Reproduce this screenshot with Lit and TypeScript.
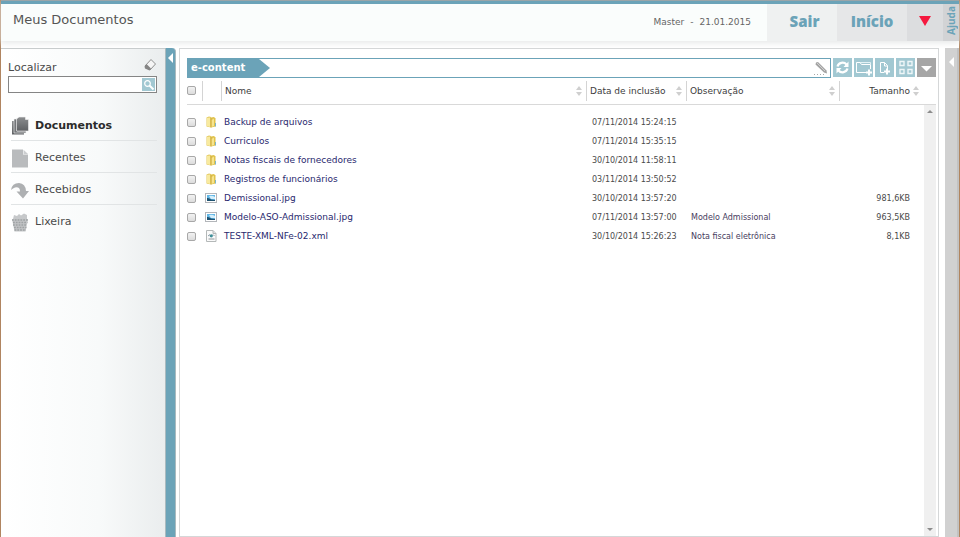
import { LitElement, html, css, svg, nothing } from "lit";
import { customElement } from "lit/decorators.js";
import { classMap } from "lit/directives/class-map.js";

type Kind = "folder" | "image" | "xml";
interface Entry { name: string; kind: Kind; date: string; note?: string; size?: string; }

const ENTRIES: Entry[] = [
  { name: "Backup de arquivos", kind: "folder", date: "07/11/2014 15:24:15" },
  { name: "Curriculos", kind: "folder", date: "07/11/2014 15:35:15" },
  { name: "Notas fiscais de fornecedores", kind: "folder", date: "30/10/2014 11:58:11" },
  { name: "Registros de funcionários", kind: "folder", date: "03/11/2014 13:50:52" },
  { name: "Demissional.jpg", kind: "image", date: "30/10/2014 13:57:20", size: "981,6KB" },
  { name: "Modelo-ASO-Admissional.jpg", kind: "image", date: "07/11/2014 13:57:00", note: "Modelo Admissional", size: "963,5KB" },
  { name: "TESTE-XML-NFe-02.xml", kind: "xml", date: "30/10/2014 15:26:23", note: "Nota fiscal eletrônica", size: "8,1KB" },
];

const icon = (w: number, h: number, body: unknown) =>
  html`<svg width=${w} height=${h} viewBox="0 0 ${w} ${h}" aria-hidden="true">${body}</svg>`;

const fileIcons: Record<Kind, unknown> = {
  folder: icon(12, 12, svg`
    <path d="M1.500 1.500 L4 0.500 L6 1 V11.500 L1.500 10.500Z" fill="#e3c95f"/>
    <path d="M2 2 L5 1.500 V11 L2 10Z" fill="#f8ea9f"/>
    <path d="M6 1.500 L9 1 L10.500 2.500 V10.500 L6 11.500Z" fill="#e0c24c"/>
    <path d="M6.500 4 L9 2.500 V10 L6.500 11Z" fill="#f6e48d"/>
    <path d="M6 2 V11.500" stroke="#cbaa45" stroke-width="0.800"/>
    <path d="M10 7 H11 V10.500 H10Z" fill="#7db5cb"/>`),
  image: icon(12, 12, svg`
    <rect x="0.500" y="1.500" width="11" height="9" fill="#fff" stroke="#b3b6ba"/>
    <rect x="2" y="3" width="8" height="6" fill="#62b7e6"/>
    <path d="M4 4 Q7 3 10 5 V7 H6Z" fill="#d5effb"/>
    <path d="M2 6 Q4 5.500 6 7.500 L10 8 V9 H2Z" fill="#1f5270"/>`),
  xml: icon(12, 12, svg`
    <path d="M1.500 0.500 H8 L11 3.500 V11.500 H1.500Z" fill="#fafafa" stroke="#b4b8b8"/>
    <path d="M8 0.500 V3.500 H11" fill="#dfe2e2" stroke="#b4b8b8"/>
    <path d="M3 6 L5 4.500 M9.500 6 L8 4.500" stroke="#8c9ba6"/>
    <circle cx="6.300" cy="5.800" r="1.600" fill="#3f8f98"/>
    <path d="M3.500 9 H9.500" stroke="#8f979c"/>`),
};

const navItems = [
  { label: "Documentos", active: true, pic: icon(18, 19, svg`
    <defs><linearGradient id="dk" x1="0" y1="0" x2="0" y2="1">
      <stop offset="0" stop-color="#8b8d8f"/><stop offset="1" stop-color="#5f6164"/></linearGradient></defs>
    <path d="M1 5 H4 V16.500 H13 V18.500 H1Z" fill="url(#dk)"/>
    <path d="M3 3 H6 V15 H15 V17 H3Z" fill="#737578" stroke="#f4f4f4" stroke-width="0.600"/>
    <path d="M5.500 3 L8 1 H14.500 V3.500 H17.500 V15 H5.500Z" fill="url(#dk)" stroke="#f4f4f4" stroke-width="0.600"/>`) },
  { label: "Recentes", pic: icon(18, 19, svg`
    <path d="M1 0.500 H12 V5.500 H17 V18.500 H1Z" fill="#b9bbbd"/><path d="M12.500 0.800 L17 5 H12.500Z" fill="#cbcdcf"/>`) },
  { label: "Recebidos", pic: icon(18, 19, svg`
    <path d="M0 9 Q1 2 8 2 Q14.500 2.500 15 10 H18 L12 17.500 L5.500 10.500 H9 Q9 5.500 4 6.500 Q2 7 0 9Z" fill="#aeb0b2"/>`) },
  { label: "Lixeira", pic: icon(18, 19, svg`
    <path d="M2 6 L3 2 L6 3 L8 1 L10 2.500 L13 0.500 L16 2 V6Z" fill="#c6c8ca"/>
    <path d="M1 6 H17 L14.500 18.500 H3.500Z" fill="#c3c5c7"/>
    <path d="M1 7 H17 M2 9.500 H16.500 M2 12 H16 M3 14.500 H15.500 M3.500 17 H15" stroke="#9fa2a4" stroke-width="1.500" stroke-dasharray="1.800 1"/>`) },
];

const columns = [
  { cls: "name", label: "Nome" },
  { cls: "date", label: "Data de inclusão" },
  { cls: "note", label: "Observação" },
  { cls: "size", label: "Tamanho" },
];

const tools = [
  { label: "Atualizar", pic: icon(19, 19, svg`
    <path d="M4.500 8.500 A5.200 5 0 0 1 13.500 6.500 M14.500 10.500 A5.200 5 0 0 1 5.500 12.500" fill="none" stroke="#fff" stroke-width="2.200"/>
    <path d="M15.500 3.500 V9 H10.500Z M3.500 15.500 V10 H8.500Z" fill="#fff"/>`) },
  { label: "Nova pasta", pic: icon(19, 19, svg`
    <path d="M12 14.500 H2.500 V4.500 H6 L7.500 6.500 H16.500 V11" fill="none" stroke="#fff"/>
    <path d="M6 4.500 H16.500 V7" fill="none" stroke="#e3f1f4"/>
    <path d="M15 11.500 V17.500 M12 14.500 H18" stroke="#fff" stroke-width="2"/>`) },
  { label: "Novo documento", pic: icon(19, 19, svg`
    <path d="M9 14.500 H5.500 V4.500 H9.500 L12.500 7.500 V11 M9.500 4.500 V8 H12.500" fill="none" stroke="#fff"/>
    <path d="M12 10.500 V16.500 M9 13.500 H15" stroke="#fff" stroke-width="2"/>`) },
  { label: "Miniaturas", pic: icon(19, 19, svg`
    <path d="M4 3.500 H8 V7.500 H4Z M12 3.500 H16 V7.500 H12Z M4 11.500 H8 V15.500 H4Z M12 11.500 H16 V15.500 H12Z" fill="none" stroke="#eef6f8" stroke-width="1.400"/>`) },
];

@customElement("app-root")
export class AppRoot extends LitElement {
  static styles = css`
    :host {
      --teal: #6ba3b8;
      --ink: #4a4a4a;
      display: block;
      font: 9px/12px "DejaVu Sans", Verdana, sans-serif;
      color: var(--ink);
    }
    *, *::before, *::after { box-sizing: border-box; }
    svg { display: block; flex: none; }
    button { font: inherit; color: inherit; border: 0; padding: 0; margin: 0; background: none; cursor: pointer; }
    a { color: inherit; text-decoration: none; }
    .page {
      display: flex; flex-direction: column; min-height: 100vh;
      border: solid #b08560; border-width: 0 1px; background: #fff;
    }
    .top {
      display: flex; align-items: stretch; height: 41px;
      border-top: 1px solid #9aa5a9;
      background: #fafdfc;
      box-shadow: inset 0 3px var(--teal), 0 2px 6px #e6e8e8;
      padding-top: 3px;
    }
    .top h1 { margin: 0; padding: 6px 12px; flex: 1; font-size: 13px; line-height: 20px; font-weight: 400; color: #555; }
    .who { display: flex; gap: 6px; align-items: center; padding: 0 16px 2px 0; color: #666; }
    .top button { background: #eff1f1; }
    .big { width: 70px; font: 800 15px/20px "Open Sans", "Noto Sans", sans-serif; color: var(--teal); padding: 0 0 4px 5px; }
    .top .home { background: #e6e7e8; padding-left: 0; }
    .top .more { width: 36px; background: #dcdddf; display: grid; place-items: center; padding-bottom: 4px; }
    .top .help { width: 16px; background: #d2d3d5; color: var(--teal); font: 700 10px/15px "Open Sans", "Noto Sans", sans-serif; display: grid; place-items: center; padding-bottom: 4px; }
    .help span { writing-mode: vertical-rl; transform: rotate(180deg); }

    .body { display: flex; flex: 1; padding-top: 7px; }
    .side {
      width: 164px; flex: none; padding: 10px 8px 0 7px;
      border-top: 1px solid #c8cccd; background: linear-gradient(90deg, #fff, #f8fafa 60%, #eaedee);
    }
    .search-head { display: flex; justify-content: space-between; align-items: center; height: 17px; font-size: 11px; }
    .search-head button { align-self: flex-start; }
    .search { display: flex; height: 17px; border: 1px solid #858585; background: #fff; padding: 1px; }
    .search input { flex: 1; min-width: 0; border: 0; padding: 0 2px; font: inherit; outline: 0; background: none; }
    .search button { width: 13px; background: #a2c8d2; display: grid; place-items: center; }
    .nav { margin: 15px 0 0; padding: 0 0 0 3px; list-style: none; font-size: 11px; }
    .nav li + li { border-top: 1px solid #e1e4e5; }
    .nav li { height: 32px; }
    .nav a { display: flex; align-items: center; gap: 6px; height: 100%; padding-top: 3px; }
    .nav .active { font-weight: 700; color: #2c2c2c; }

    .fold { flex: none; display: flex; justify-content: center; align-items: flex-start; padding-top: 5px; }
    .fold-left { width: 11px; background: var(--teal); border: solid #a9babf; border-width: 0 1px; border-radius: 0 4px 0 0; }
    .fold-right { width: 14px; background: #d1d1d1; margin-left: 6px; border-right: 2px solid #c2c2c2; padding-top: 9px; }

    .main {
      flex: 1; min-width: 0; display: flex; flex-direction: column;
      margin-left: 3px; padding: 9px 2px 0 7px; border: 1px solid #d5d7d8;
    }
    .bar { display: flex; gap: 2px; height: 20px; }
    .crumbs { flex: 1; display: flex; border: 1px solid var(--teal); }
    .crumbs a { background: var(--teal); color: #fff; font-size: 10px; font-weight: 700; line-height: 18px; padding-left: 3px; width: 71px; }
    .crumbs button { margin-left: auto; }
    .tip { width: 11px; background: var(--teal); clip-path: polygon(0 0, 100% 50%, 0 100%); }
    .tool { width: 19px; height: 19px; background: #a2c8d2; }
    .tool-more { background: #a6a6a6; }

    .files { flex: 1; position: relative; }
    table { width: 100%; table-layout: fixed; border-collapse: collapse; }
    th, td { padding: 0; text-align: left; font-weight: 400; white-space: nowrap; vertical-align: middle; }
    thead tr { border-bottom: 1px solid #d9d9d9; }
    thead th { height: 26px; color: #3d3d3d; }
    .c-check { width: 15px; } .c-icon { width: 19px; } .c-date { width: 100px; } .c-note { width: 153px; } .c-size { width: 97px; }
    .cell { display: flex; align-items: center; height: 20px; padding: 0 4px 0 3px; border-left: 1px solid #d4d4d4; }
    .cell button { margin-left: auto; }
    .cell.size { justify-content: flex-end; padding-right: 17px; }
    .cell.size button { margin-left: 3px; }
    tbody::before { content: ""; display: block; height: 8px; }
    tbody td { height: 19px; line-height: 13px; font-size: 8px; }
    tbody .t-icon { padding-left: 3px; }
    tbody .t-name { font-size: 9px; color: #28286e; padding-left: 3px; }
    tbody .t-date { padding-left: 6px; }
    tbody .t-note { padding-left: 5px; color: #473c5e; }
    tbody .t-size { text-align: right; padding-right: 26px; }
    input[type="checkbox"] {
      appearance: none; display: block; width: 9px; height: 9px; margin: 0;
      border: 1px solid #a8a8a8; border-radius: 2px; background: linear-gradient(#f2f2f2, #dcdcdc);
    }
    .scroll {
      position: absolute; top: 27px; right: 0; bottom: 0; width: 12px; background: #f0f0f0;
      display: flex; flex-direction: column; justify-content: space-between; align-items: center; padding: 5px 0;
    }
  `;

  render() {
    const sorter = icon(6, 10, svg`<path d="M3 0 L6 4 H0Z M3 10 L6 6 H0Z" fill="#cfcfcf"/>`);
    const left = icon(5, 10, svg`<path d="M5 0 V10 L0 5Z" fill="#fff"/>`);
    return html`
      <div class="page">
        <header class="top">
          <h1>Meus Documentos</h1>
          <div class="who"><span>Master</span><span>-</span><span>21.01.2015</span></div>
          <button class="big">Sair</button>
          <button class="big home">Início</button>
          <button class="more" aria-label="Mais opções">${icon(12, 10, svg`<path d="M0 0 H12 L6 10Z" fill="#f5193f"/>`)}</button>
          <button class="help"><span>Ajuda</span></button>
        </header>
        <div class="body">
          <aside class="side">
            <div class="search-head">
              <label for="q">Localizar</label>
              <button aria-label="Limpar">${icon(14, 14, svg`
                <path d="M2 7 L8 0.500 L12.500 5 L7 11Z" fill="#f5f5f5" stroke="#8d8d8d"/>
                <path d="M1.500 7.500 L3.500 5 L8 9.500 L6.500 11.500 L2 9.500Z" fill="#858585"/>`)}</button>
            </div>
            <div class="search">
              <input id="q" type="text" />
              <button aria-label="Buscar">${icon(12, 12, svg`
                <circle cx="4.500" cy="4.500" r="2.800" fill="none" stroke="#fff" stroke-width="1.200"/>
                <path d="M6.500 6.500 L10.500 10.500" stroke="#fff" stroke-width="2"/>`)}</button>
            </div>
            <ul class="nav">
              ${navItems.map((n) => html`<li><a href="#" class=${classMap({ active: !!n.active })}>${n.pic}${n.label}</a></li>`)}
            </ul>
          </aside>
          <button class="fold fold-left" aria-label="Recolher menu">${left}</button>
          <main class="main">
            <div class="bar">
              <nav class="crumbs">
                <a href="#">e-content</a><span class="tip"></span>
                <button aria-label="Editar caminho">${icon(18, 18, svg`
                  <path d="M4 3.500 L6 3 L14.500 11.500 L15 14.500 L12 13.500 L3.500 5.500Z" fill="#a3a3a3"/>
                  <path d="M5 4 L13 12" stroke="#d0d0d0"/>
                  <path d="M2 15.500 H12" stroke="#a8a8a8" stroke-dasharray="1 2"/>`)}</button>
              </nav>
              ${tools.map((t) => html`<button class="tool" aria-label=${t.label}>${t.pic}</button>`)}
              <button class="tool tool-more" aria-label="Mais ações">${icon(19, 19, svg`<path d="M4 8 H15 L9.500 13.500Z" fill="#fff"/>`)}</button>
            </div>
            <div class="files">
              <table>
                <colgroup>
                  <col class="c-check" /><col class="c-icon" /><col /><col class="c-date" /><col class="c-note" /><col class="c-size" />
                </colgroup>
                <thead>
                  <tr>
                    <th><input type="checkbox" aria-label="Selecionar tudo" /></th>
                    <th><div class="cell"></div></th>
                    ${columns.map((c) => html`<th scope="col"><div class="cell ${c.cls}">${c.label}<button aria-label="Ordenar por ${c.label}">${sorter}</button></div></th>`)}
                  </tr>
                </thead>
                <tbody>
                  ${ENTRIES.map((e) => html`
                    <tr>
                      <td><input type="checkbox" aria-label=${e.name} /></td>
                      <td class="t-icon">${fileIcons[e.kind]}</td>
                      <td class="t-name"><a href="#">${e.name}</a></td>
                      <td class="t-date">${e.date}</td>
                      <td class="t-note">${e.note ?? nothing}</td>
                      <td class="t-size">${e.size ?? nothing}</td>
                    </tr>`)}
                </tbody>
              </table>
              <div class="scroll">
                <button aria-label="Rolar para cima">${icon(6, 3, svg`<path d="M3 0 L6 3 H0Z" fill="#8c8c8c"/>`)}</button>
                <button aria-label="Rolar para baixo">${icon(6, 3, svg`<path d="M0 0 H6 L3 3Z" fill="#8c8c8c"/>`)}</button>
              </div>
            </div>
          </main>
          <button class="fold fold-right" aria-label="Abrir painel de ajuda">${left}</button>
        </div>
      </div>
    `;
  }
}
